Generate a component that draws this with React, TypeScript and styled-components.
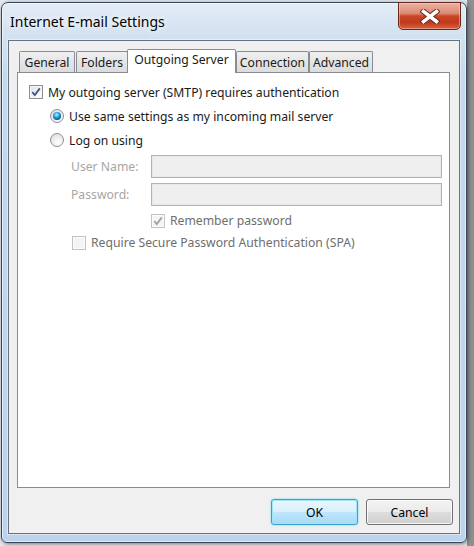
import React from 'react';
import styled, { createGlobalStyle } from 'styled-components';

const GlobalStyle = createGlobalStyle`
  html, body {
    margin: 0;
    padding: 0;
  }
  body {
    background: #e4e8ed;
    font-family: "Noto Sans", "Open Sans", Arial, sans-serif;
    font-size: 12.2px;
    color: #1a1a1a;
  }
`;

const Desktop = styled.div`
  width: 474px;
  height: 546px;
  overflow: hidden;
  box-sizing: border-box;
  padding: 2px 0 0 1px;
  background: linear-gradient(to right, #e6eaef 0, #e6eaef 467px, #8e9093 467px, #8e9093 100%);
`;

const Window = styled.div`
  box-sizing: border-box;
  width: 466px;
  height: 541px;
  border: 1px solid #3a4655;
  border-radius: 7px 7px 6px 6px;
  padding: 0 6px 8px;
  display: flex;
  flex-direction: column;
  background: linear-gradient(180deg, #e3edf7 0%, #d5e3f1 5%, #c4d9ee 14%, #bcd3eb 100%);
  box-shadow: inset 0 0 0 1px rgba(255, 255, 255, 0.55), 1px 1px 4px rgba(0, 0, 0, 0.5);
`;

const TitleBar = styled.div`
  height: 37px;
  display: flex;
  align-items: center;
  padding-left: 2px;
`;

const Title = styled.span`
  font-size: 14px;
  color: #000;
  text-shadow: 0 0 6px rgba(255, 255, 255, 0.9), 0 0 10px rgba(255, 255, 255, 0.8);
`;

const CloseButton = styled.div`
  align-self: flex-start;
  margin: -1px -1px 0 auto;
  width: 63px;
  height: 28px;
  box-sizing: border-box;
  border: 1px solid #6e261a;
  border-radius: 0 0 5px 5px;
  display: flex;
  align-items: center;
  justify-content: center;
  background: linear-gradient(180deg, #eab2a2 0%, #dc8a73 40%, #c8472a 50%, #c13a1c 75%, #d6643f 100%);
  box-shadow: inset 0 0 0 1px rgba(255, 210, 195, 0.45);
`;

const Client = styled.div`
  flex: 1;
  display: flex;
  flex-direction: column;
  border: 1px solid #67737f;
  background: #f0f0f0;
  padding: 8px 6px 8px 8px;
  box-shadow: 0 0 0 1px rgba(255, 255, 255, 0.45);
`;

const TabStrip = styled.div`
  height: 23px;
  display: flex;
  align-items: flex-end;
  padding-left: 2px;
  position: relative;
  z-index: 1;
`;

const Tab = styled.div<{ $w: number; $gap?: number; $active?: boolean }>`
  box-sizing: border-box;
  width: ${p => p.$w}px;
  height: ${p => (p.$active ? 24 : 21)}px;
  margin-left: ${p => p.$gap ?? 0}px;
  margin-bottom: ${p => (p.$active ? -1 : 0)}px;
  border: 1px solid #898c95;
  border-bottom: 0;
  border-radius: 2px 2px 0 0;
  background: ${p => (p.$active ? '#ffffff' : 'linear-gradient(180deg, #f0f0f0 0%, #e5e5e5 50%, #dcdcdc 100%)')};
  display: flex;
  align-items: center;
  justify-content: center;
  padding-bottom: ${p => (p.$active ? 4 : 0)}px;
  color: #1a1a1a;
  white-space: nowrap;
`;

const Panel = styled.div`
  flex: 1;
  margin-right: 3px;
  border: 1px solid #898c95;
  background: #fff;
  padding: 7px 0 0 11px;
  display: flex;
  flex-direction: column;
`;

const Row = styled.div<{ $indent?: number; $top?: number; $h: number }>`
  display: flex;
  align-items: center;
  height: ${p => p.$h}px;
  margin-left: ${p => p.$indent ?? 0}px;
  margin-top: ${p => p.$top ?? 0}px;
  gap: 5px;
  white-space: nowrap;
`;

const Text = styled.span<{ $tone?: 'normal' | 'dim' | 'faint' }>`
  color: ${p => (p.$tone === 'faint' ? '#a6a6a6' : p.$tone === 'dim' ? '#6e6e6e' : '#1a1a1a')};
`;

const FieldRow = styled(Row)`
  gap: 0;
`;

const FieldLabel = styled(Text)`
  width: 80px;
  color: #a6a6a6;
`;

const TextBox = styled.div`
  box-sizing: border-box;
  width: 291px;
  height: 23px;
  border: 1px solid #adb4be;
  background: #efefef;
  box-shadow: inset 0 0 0 1px #e6e8eb;
`;

const CheckBox = styled.span<{ $disabled?: boolean }>`
  box-sizing: border-box;
  width: 14px;
  height: 14px;
  flex: none;
  display: flex;
  align-items: center;
  justify-content: center;
  border: 1px solid ${p => (p.$disabled ? '#c2c2c2' : '#8e8f8f')};
  background: ${p => (p.$disabled ? '#f4f4f4' : 'linear-gradient(135deg, #dadee4 0%, #f5f6f7 60%, #ffffff 100%)')};
  box-shadow: inset 0 0 0 1px ${p => (p.$disabled ? '#fbfbfb' : '#f6f6f6')};
`;

const Radio = styled.span<{ $checked?: boolean }>`
  box-sizing: border-box;
  width: 14px;
  height: 14px;
  flex: none;
  border-radius: 50%;
  border: 1px solid #8c8f94;
  background: radial-gradient(circle at 60% 70%, #ffffff 0%, #e9e9e9 60%, #d2d2d2 100%);
  position: relative;
  &::after {
    content: '';
    position: absolute;
    inset: 2px;
    border-radius: 50%;
    display: ${p => (p.$checked ? 'block' : 'none')};
    background: radial-gradient(circle at 45% 35%, #c8f4ff 0%, #45bde9 28%, #0b6fb8 60%, #0b3365 100%);
  }
`;

const ButtonBar = styled.div`
  display: flex;
  justify-content: flex-end;
  gap: 8px;
  margin-top: 11px;
`;

const Button = styled.div<{ $default?: boolean }>`
  box-sizing: border-box;
  width: 87px;
  height: 26px;
  border-radius: 3px;
  display: flex;
  align-items: center;
  justify-content: center;
  color: #000;
  border: 1px solid ${p => (p.$default ? '#36a3c9' : '#707070')};
  background: ${p =>
    p.$default
      ? 'linear-gradient(180deg, #eaf6fd 0%, #d9f0fc 48%, #bee6fd 52%, #a7d9f5 100%)'
      : 'linear-gradient(180deg, #f2f2f2 0%, #ebebeb 48%, #dddddd 52%, #cfcfcf 100%)'};
  box-shadow: ${p =>
    p.$default
      ? 'inset 0 0 0 1px #9fe6fb, 0 0 2px #5ccdf0'
      : 'inset 0 0 0 1px rgba(255, 255, 255, 0.8)'};
`;

const Check = ({ color }: { color: string }) => (
  <svg width="10" height="10" viewBox="0 0 10 10">
    <path d="M1.3 5.2 L3.8 8 L8.8 1.4" fill="none" stroke={color} strokeWidth="1.8" />
  </svg>
);

const tabs = [
  { label: 'General', w: 56 },
  { label: 'Folders', w: 52, gap: 1 },
  { label: 'Outgoing Server', w: 109, gap: -1, active: true },
  { label: 'Connection', w: 73 },
  { label: 'Advanced', w: 64 },
];

export default function App() {
  return (
    <>
      <GlobalStyle />
      <Desktop>
        <Window>
          <TitleBar>
            <Title>Internet E-mail Settings</Title>
            <CloseButton>
              <svg width="20" height="15" viewBox="0 0 20 15">
                <path d="M3.5 2.5 L16.5 12.5 M16.5 2.5 L3.5 12.5" stroke="#6a2a1c" strokeWidth="5.5" strokeLinecap="square" />
                <path d="M3.5 2.5 L16.5 12.5 M16.5 2.5 L3.5 12.5" stroke="#ffffff" strokeWidth="3.5" strokeLinecap="square" />
              </svg>
            </CloseButton>
          </TitleBar>
          <Client>
            <TabStrip>
              {tabs.map(t => (
                <Tab key={t.label} $w={t.w} $gap={t.gap} $active={t.active}>
                  {t.label}
                </Tab>
              ))}
            </TabStrip>
            <Panel>
              <Row $h={24}>
                <CheckBox>
                  <Check color="#3f5387" />
                </CheckBox>
                <Text>My outgoing server (SMTP) requires authentication</Text>
              </Row>
              <Row $h={24} $indent={21}>
                <Radio $checked />
                <Text>Use same settings as my incoming mail server</Text>
              </Row>
              <Row $h={24} $indent={21}>
                <Radio />
                <Text>Log on using</Text>
              </Row>
              <FieldRow $h={23} $indent={42} $top={3}>
                <FieldLabel>User Name:</FieldLabel>
                <TextBox />
              </FieldRow>
              <FieldRow $h={23} $indent={42} $top={5}>
                <FieldLabel>Password:</FieldLabel>
                <TextBox />
              </FieldRow>
              <Row $h={15} $indent={122} $top={7}>
                <CheckBox $disabled>
                  <Check color="#a3a3a3" />
                </CheckBox>
                <Text $tone="dim">Remember password</Text>
              </Row>
              <Row $h={15} $indent={43} $top={7}>
                <CheckBox $disabled />
                <Text $tone="dim">Require Secure Password Authentication (SPA)</Text>
              </Row>
            </Panel>
            <ButtonBar>
              <Button $default>OK</Button>
              <Button>Cancel</Button>
            </ButtonBar>
          </Client>
        </Window>
      </Desktop>
    </>
  );
}
